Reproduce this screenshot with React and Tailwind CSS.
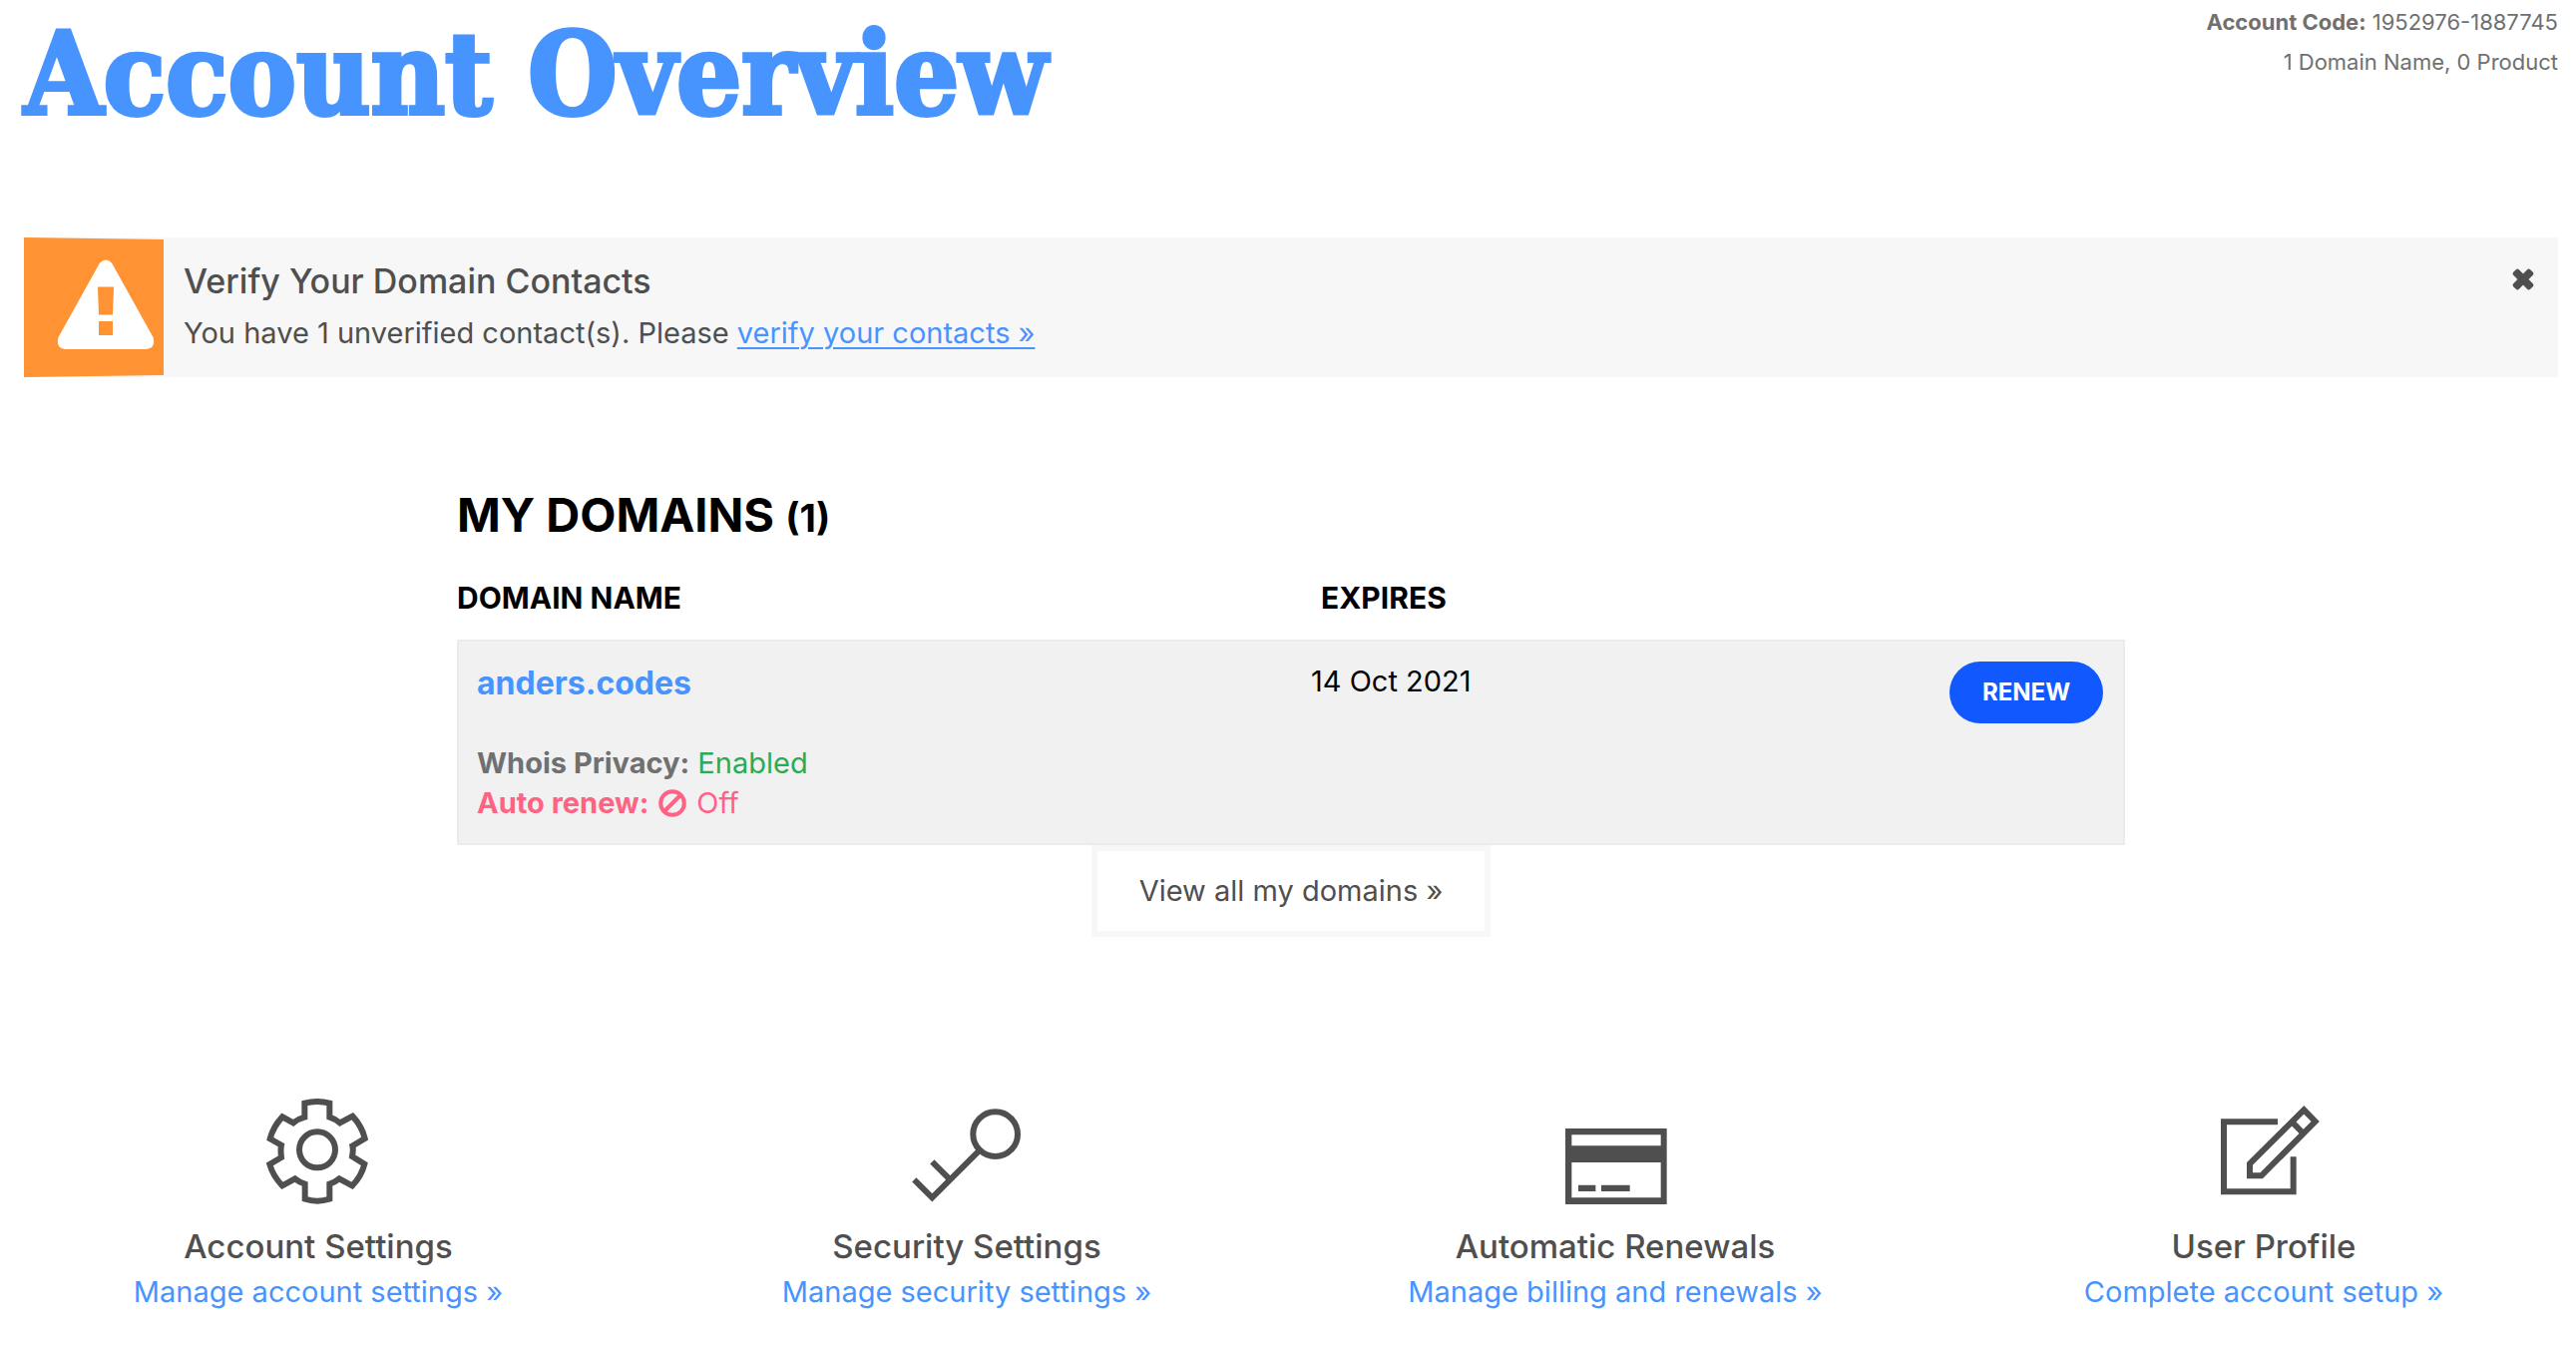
import React from "react";

function WarningIcon() {
  return (
    <svg viewBox="0 0 98 90" className="ml-[33px] h-[90px] w-[98px]" aria-hidden="true">
      <path
        fillRule="evenodd"
        fill="#fff"
        d="M43 3.500Q49 -2.500 55 3.500L96.500 78Q99.500 88.500 90 90H8Q-1.500 88.500 1.500 78ZM41 27.500 42 55.500H56L57 27.500ZM42 62V76H56V62Z"
      />
    </svg>
  );
}

function CloseIcon() {
  return (
    <svg viewBox="0 0 22 22" className="size-[22px]" fill="#4f4f4f" aria-hidden="true">
      <rect x="-1" y="7" width="24" height="8" rx="2.5" transform="rotate(45 11 11)" />
      <rect x="-1" y="7" width="24" height="8" rx="2.5" transform="rotate(-45 11 11)" />
    </svg>
  );
}

function BanIcon() {
  return (
    <svg viewBox="0 0 28 28" className="size-7" fill="none" stroke="currentColor" strokeWidth="4" aria-hidden="true">
      <circle cx="14" cy="14" r="11.800" />
      <path d="M5.500 22.500 22.500 5.500" />
    </svg>
  );
}

function GearIcon() {
  return (
    <svg viewBox="-4 60 480 330" className="h-[110px] w-40" fill="none" stroke="#4f4f4f" strokeWidth="18" aria-hidden="true">
      <circle cx="233" cy="214" r="54" />
      <path d="M195 74Q233 64 270 74V116Q286 121 301 133L339 113Q367 143 376 180L339 202Q342 214 338 234L375 257Q366 293 338 322L299 301Q285 312 270 317V362Q233 374 196 362V317Q180 312 166 301L128 322Q100 293 90 258L125 237Q122 214 125 200L91 181Q100 145 128 115L161 133Q176 121 195 116Z" />
    </svg>
  );
}

function KeyIcon() {
  return (
    <svg viewBox="-4 60 480 330" className="h-[110px] w-40" fill="none" stroke="#4f4f4f" strokeWidth="18" aria-hidden="true">
      <circle cx="322" cy="167" r="67" />
      <path d="M273 217 132 358 78 304M186 304 132 250" />
    </svg>
  );
}

function CardIcon() {
  return (
    <svg viewBox="-4 60 480 330" className="h-[110px] w-40" fill="#4f4f4f" aria-hidden="true">
      <path fillRule="evenodd" d="M86 150H391V378H86ZM105 169V202H373V169ZM105 252V358H373V252Z" />
      <path d="M125 320H177V339H125ZM194 320H280V339H194Z" />
    </svg>
  );
}

function EditIcon() {
  return (
    <svg viewBox="-33 60 480 330" className="h-[110px] w-40" fill="none" stroke="#4f4f4f" strokeWidth="18" aria-hidden="true">
      <path d="M249 130H87V340H296V235" />
      <path d="M328 94 362 129 200 292H165V256ZM292 130 326 165" />
    </svg>
  );
}

const shortcuts = [
  { title: "Account Settings", link: "Manage account settings »", Icon: GearIcon },
  { title: "Security Settings", link: "Manage security settings »", Icon: KeyIcon },
  { title: "Automatic Renewals", link: "Manage billing and renewals »", Icon: CardIcon },
  { title: "User Profile", link: "Complete account setup »", Icon: EditIcon },
];

export default function App() {
  return (
    <main className="pr-[18px] pl-6 font-['Inter',sans-serif] text-[29px] leading-10 text-[#4f4f4f]">
      <header className="flex min-h-[238px] items-start justify-between pt-0.5">
        <h1 className="mt-3 font-['DejaVu_Serif_Condensed','DejaVu_Serif',serif] text-[114px] leading-[120px] font-bold whitespace-nowrap text-[#4894ff] [-webkit-text-stroke:4px_#4894ff]">
          Account Overview
        </h1>
        <div className="text-right text-[22px] leading-10 text-[#707070]">
          <p>
            <strong className="font-bold">Account Code:</strong> 1952976-1887745
          </p>
          <p>1 Domain Name, 0 Product</p>
        </div>
      </header>

      <section className="flex items-start bg-[#f7f7f7]">
        <div className="flex h-[140px] w-[140px] shrink-0 items-center bg-[#ff9232] pb-1.5 [clip-path:polygon(0_0,100%_2px,100%_138px,0_100%)]">
          <WarningIcon />
        </div>
        <div className="ml-5 grow pt-5">
          <h2 className="text-[34px] leading-12 font-medium">Verify Your Domain Contacts</h2>
          <p className="leading-14">
            You have 1 unverified contact(s). Please{" "}
            <a href="#contacts" className="text-[#4894ff] underline decoration-2 underline-offset-4">
              verify your contacts »
            </a>
          </p>
        </div>
        <button type="button" aria-label="Dismiss" className="mt-[31px] mr-6">
          <CloseIcon />
        </button>
      </section>

      <section className="mx-auto w-full max-w-[1672px] pt-[108px]">
        <h2 className="text-[47px] leading-[60px] font-bold text-black">
          MY DOMAINS <span className="text-[38px]">(1)</span>
        </h2>
        <table className="mt-7 w-full table-fixed border-separate border-spacing-0 text-left">
          <thead>
            <tr className="text-[30px] leading-10 text-black">
              <th scope="col" className="w-1/2 pt-0.5 pb-5.5 font-bold">DOMAIN NAME</th>
              <th scope="col" className="w-1/4 pt-0.5 pb-5.5 pl-7.5 font-bold">EXPIRES</th>
              <td className="w-1/4" />
            </tr>
          </thead>
          <tbody>
            <tr className="bg-[#f1f1f1] align-top">
              <td className="border-y-2 border-l-2 border-[#ebebeb] py-5 pl-4.5">
                <a href="#domain" className="block text-[32px] leading-11 font-bold text-[#4894ff]">anders.codes</a>
                <p className="mt-9.5 text-[#707070]">
                  <strong className="font-bold">Whois Privacy:</strong> <span className="text-[#2aab54]">Enabled</span>
                </p>
                <p className="flex items-center gap-2.5 text-[#ff6283]">
                  <strong className="font-bold">Auto renew:</strong>
                  <BanIcon />
                  <span>Off</span>
                </p>
              </td>
              <td className="border-y-2 border-[#ebebeb] p-5 text-black">14 Oct 2021</td>
              <td className="border-y-2 border-r-2 border-[#ebebeb] p-5 text-right">
                <button
                  type="button"
                  className="h-[62px] w-[154px] rounded-full bg-[#1159ff] align-top text-[24px] leading-8 font-bold text-white"
                >
                  RENEW
                </button>
              </td>
            </tr>
          </tbody>
        </table>
        <div className="flex justify-center">
          <a href="#domains" className="border-6 border-[#f7f7f7] px-[42px] py-5">View all my domains »</a>
        </div>
      </section>

      <nav aria-label="Account shortcuts" className="mt-[162px] grid grid-cols-4 gap-15 text-center">
        {shortcuts.map(({ title, link, Icon }) => (
          <div key={title} className="flex flex-col items-center">
            <Icon />
            <h3 className="mt-3.5 text-[33px] leading-12 font-medium">{title}</h3>
            <a href="#settings" className="leading-11 text-[#4894ff]">{link}</a>
          </div>
        ))}
      </nav>
    </main>
  );
}
